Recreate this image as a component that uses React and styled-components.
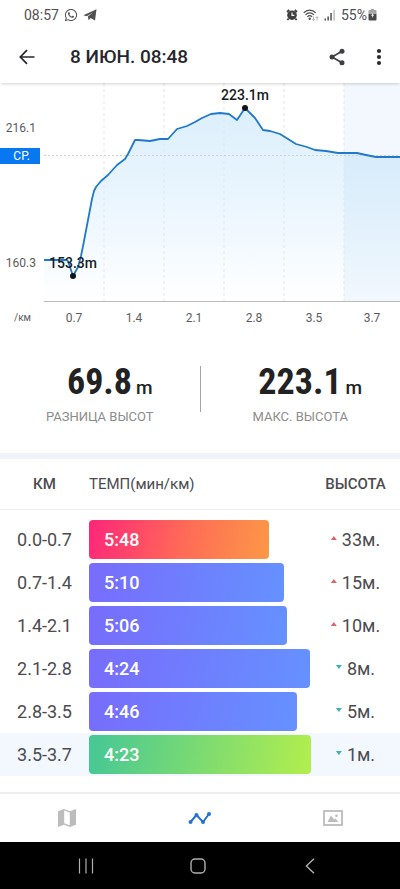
import React, { useState } from 'react'
import styled, { createGlobalStyle } from 'styled-components'
import { FaWhatsapp } from 'react-icons/fa'

const PLOT_WIDTH = 356
const PLOT_HEIGHT = 219

const elevation = [
    [0, 177], [22, 177], [24, 178], [29, 193], [34, 184], [37, 173], [40, 158], [44, 137],
    [48, 116], [50, 108], [52, 104], [57, 98], [64, 92], [73, 82], [81, 76], [84, 71],
    [91, 57], [94, 57], [106, 58], [116, 56], [124, 56], [133, 46], [143, 43], [151, 39],
    [158, 35], [167, 31], [176, 30], [185, 31], [193, 37], [201, 25], [211, 35], [219, 47],
    [226, 48], [236, 51], [252, 61], [263, 64], [271, 67], [282, 68], [294, 70], [313, 70],
    [322, 72], [332, 74], [356, 74]
]

const peaks = [
    { label: '153.3m', x: 29, y: 193 },
    { label: '223.1m', x: 201, y: 25 }
]

const distances = ['0.7', '1.4', '2.1', '2.8', '3.5', '3.7']

const splits = [
    { km: '0.0-0.7', pace: '5:48', width: 81, climb: 33, up: true, kind: 'slow' },
    { km: '0.7-1.4', pace: '5:10', width: 88, climb: 15, up: true },
    { km: '1.4-2.1', pace: '5:06', width: 89, climb: 10, up: true },
    { km: '2.1-2.8', pace: '4:24', width: 99.5, climb: 8 },
    { km: '2.8-3.5', pace: '4:46', width: 93.7, climb: 5 },
    { km: '3.5-3.7', pace: '4:23', width: 100, climb: 1, kind: 'fast' }
]

const gradients = {
    slow: 'linear-gradient(100deg, #ff2679, #ff6a57 52%, #fb9846)',
    normal: 'linear-gradient(100deg, #786cfc, #6591ff)',
    fast: 'linear-gradient(100deg, #45c796, #b3ee4d)'
}

const ElevationChart = () => {
    const line = elevation.map((p) => p.join(',')).join(' L')

    return (
        <Chart>
            <YAxis>
                <span>216.1</span>
                <Average>СР.</Average>
                <Lowest>160.3</Lowest>
            </YAxis>
            <Plot>
                <PlotSvg viewBox={`0 0 ${PLOT_WIDTH} ${PLOT_HEIGHT}`} preserveAspectRatio="none">
                    <defs>
                        <linearGradient id="area" x1="0" y1="0" x2="0" y2="1">
                            <stop offset="0" stopColor="#dceffc" />
                            <stop offset="0.5" stopColor="#ebf6fe" />
                            <stop offset="1" stopColor="#ffffff" />
                        </linearGradient>
                    </defs>
                    <path d={`M${line} L356,219 L0,219 Z`} fill="url(#area)" />
                    <rect x="300" y="0" width="56" height="219" fill="#2088dc" fillOpacity="0.06" />
                    {[60, 120, 180, 240, 300].map((x) => (
                        <line key={x} x1={x} x2={x} y1="0" y2="219" stroke="#e0e7ed" strokeDasharray="3 3" />
                    ))}
                    <line x1="0" x2="356" y1="72.5" y2="72.5" stroke="#ccd3d9" strokeDasharray="2 2" />
                    <path d={`M${line}`} fill="none" stroke="#2079cb" strokeWidth="1.8" strokeLinejoin="round" vectorEffect="non-scaling-stroke" />
                    <line x1="0" x2="356" y1="218.5" y2="218.5" stroke="#b8bbbe" />
                </PlotSvg>
                {peaks.map((p) => (
                    <Peak key={p.label} style={{ left: `${(p.x / PLOT_WIDTH) * 100}%`, top: p.y }}>
                        <PeakLabel>{p.label}</PeakLabel>
                    </Peak>
                ))}
            </Plot>
            <Unit>/км</Unit>
            <XAxis>
                {distances.map((d) => <span key={d}>{d}</span>)}
            </XAxis>
        </Chart>
    )
}

const App = () => {
    const [tab, setTab] = useState('chart')

    return (
        <>
            <GlobalStyle />
            <Page>
                <StatusBar>
                    <StatusGroup>
                        <span>08:57</span>
                        <FaWhatsapp size={14} />
                        <svg width="14" height="12" viewBox="0 0 14 12">
                            <path fill="#505053" d="M0.4 6.2 13.5 0.3 12 11.6 7.6 9 5.6 11.2 4.9 7.6 10.2 3.2 3.7 7.2Z" />
                        </svg>
                    </StatusGroup>
                    <StatusGroup>
                        <svg width="12" height="12" viewBox="0 0 12 12">
                            <path d="M1 3 3.2 1M11 3 8.8 1M2.6 9.6 1.4 11M9.4 9.6 10.6 11" stroke="#3f3f42" strokeWidth="1.8" />
                            <circle cx="6" cy="6.2" r="4.8" fill="#3f3f42" />
                            <path d="M6 3.4V6.4H8.4" fill="none" stroke="#fff" strokeWidth="1.1" />
                        </svg>
                        <svg width="16" height="12" viewBox="0 0 16 12">
                            <g fill="none" stroke="#505053" strokeWidth="1.2">
                                <path d="M0.7 3.8C4 0.2 9.4 0.2 12.7 3.8" />
                                <path d="M2.5 5.8C5 3.2 8.4 3.2 10.9 5.8" />
                                <path d="M4.3 7.8C5.9 6.2 7.5 6.2 9.1 7.8" />
                            </g>
                            <circle cx="6.7" cy="9.8" r="1.2" fill="#505053" />
                            <path d="M10.5 7.5V11.5M9.3 10.3 10.5 11.6 11.7 10.3M14 11.5V7.8M12.9 8.9 14 7.6 15.1 8.9" fill="none" stroke="#a2a2a5" strokeWidth="0.8" />
                        </svg>
                        <svg width="12" height="12" viewBox="0 0 12 12">
                            <path fill="#505053" d="M0.5 9.5H2V11.5H0.5ZM3.4 7.5H4.9V11.5H3.4ZM6.3 4H7.8V11.5H6.3Z" />
                            <path fill="#bcbcbf" d="M9.4 1H10.9V11.5H9.4Z" />
                        </svg>
                        <Battery>
                            55%
                            <svg width="9" height="12" viewBox="0 0 9 12">
                                <path fill="#a5a5a8" d="M3 0H6V1H7.5Q8.5 1 8.5 2V5H0.5V2Q0.5 1 1.5 1H3Z" />
                                <path fill="#48484b" d="M0.5 5H8.5V10.5Q8.5 11.5 7.5 11.5H1.5Q0.5 11.5 0.5 10.5Z" />
                                <path fill="#fff" d="M5.3 3.4 3 6.8H4.4L3.9 9.2 6.1 5.8H4.8Z" />
                            </svg>
                        </Battery>
                    </StatusGroup>
                </StatusBar>

                <AppBar>
                    <IconButton aria-label="Назад">
                        <svg width="16" height="16" viewBox="0 0 16 16" fill="none" stroke="#26262c" strokeWidth="1.7">
                            <path d="M15.5 8H1.5M8 1.2 1.3 8 8 14.8" />
                        </svg>
                    </IconButton>
                    <Title>8 ИЮН. 08:48</Title>
                    <IconButton aria-label="Поделиться">
                        <svg width="16" height="18" viewBox="0 0 16 18">
                            <path d="M13 3.2 3 9 13 14.8" fill="none" stroke="#3d3d42" strokeWidth="1.7" />
                            <g fill="#3d3d42">
                                <circle cx="13" cy="3.2" r="2.5" />
                                <circle cx="3" cy="9" r="2.5" />
                                <circle cx="13" cy="14.8" r="2.5" />
                            </g>
                        </svg>
                    </IconButton>
                    <IconButton aria-label="Ещё">
                        <svg width="16" height="18" viewBox="0 0 16 18" fill="#2a2a30">
                            <circle cx="8" cy="3" r="2.1" />
                            <circle cx="8" cy="9" r="2.1" />
                            <circle cx="8" cy="15" r="2.1" />
                        </svg>
                    </IconButton>
                </AppBar>

                <Content>
                    <ElevationChart />

                    <Stats>
                        <Stat>
                            <Value><Digits>69.8</Digits>m</Value>
                            <Caption>РАЗНИЦА ВЫСОТ</Caption>
                        </Stat>
                        <Divider />
                        <Stat>
                            <Value><Digits>223.1</Digits>m</Value>
                            <Caption>МАКС. ВЫСОТА</Caption>
                        </Stat>
                    </Stats>

                    <Table>
                        <thead>
                            <tr>
                                <HeadCell $side $bold>КМ</HeadCell>
                                <HeadCell>ТЕМП(мин/км)</HeadCell>
                                <HeadCell $side $bold>ВЫСОТА</HeadCell>
                            </tr>
                        </thead>
                        <tbody>
                            {splits.map((s) => (
                                <Row key={s.km} $active={s.kind === 'fast'}>
                                    <Cell>{s.km}</Cell>
                                    <Cell>
                                        <Bar $kind={s.kind || 'normal'} style={{ width: `${s.width}%` }}>{s.pace}</Bar>
                                    </Cell>
                                    <Cell>
                                        <Climb>
                                            <Arrow $up={s.up} />
                                            {s.climb}м.
                                        </Climb>
                                    </Cell>
                                </Row>
                            ))}
                        </tbody>
                    </Table>
                </Content>

                <Tabs>
                    <Tab aria-label="Карта" $active={tab === 'map'} onClick={() => setTab('map')}>
                        <svg width="18" height="18" viewBox="0 0 18 18" fill="currentColor">
                            <path d="M0 2.2 6 0 12 2.2 18 0V15.8L12 18 6 15.8 0 18Z" />
                            <path d="M6.2 1.6 11.8 3.6V16.3L6.2 14.3Z" fill="#fff" />
                        </svg>
                    </Tab>
                    <Tab aria-label="Графики" $active={tab === 'chart'} onClick={() => setTab('chart')}>
                        <svg width="24" height="16" viewBox="0 0 24 16" fill="currentColor">
                            <path d="M2.5 12 8.5 5 15 12 21 4" fill="none" stroke="currentColor" strokeWidth="2" />
                            <circle cx="2.5" cy="12" r="2" />
                            <circle cx="8.5" cy="5" r="2" />
                            <circle cx="15" cy="12" r="2" />
                            <circle cx="21" cy="4" r="2" />
                        </svg>
                    </Tab>
                    <Tab aria-label="Фото" $active={tab === 'photo'} onClick={() => setTab('photo')}>
                        <svg width="20" height="16" viewBox="0 0 20 16" fill="currentColor">
                            <rect x="1" y="1" width="18" height="14" fill="none" stroke="currentColor" strokeWidth="1.8" />
                            <path d="M4.5 12 8 5.5 11 9.5 12.5 8.5 15.5 12Z" />
                            <circle cx="13.5" cy="5.8" r="1.3" />
                        </svg>
                    </Tab>
                </Tabs>

                <SystemNav>
                    <NavButton aria-label="Недавние">
                        <svg width="16" height="16" viewBox="0 0 16 16" stroke="#b0b0b0" strokeWidth="1.2">
                            <path d="M1.5 0.5V15.5M8 0.5V15.5M14.5 0.5V15.5" />
                        </svg>
                    </NavButton>
                    <NavButton aria-label="Домой">
                        <svg width="16" height="16" viewBox="0 0 16 16" fill="none" stroke="#b0b0b0" strokeWidth="1.4">
                            <rect x="1" y="1" width="14" height="14" rx="4" />
                        </svg>
                    </NavButton>
                    <NavButton aria-label="Назад">
                        <svg width="16" height="16" viewBox="0 0 16 16" fill="none" stroke="#b0b0b0" strokeWidth="1.4">
                            <path d="M12 0.7 4.4 8 12 15.3" />
                        </svg>
                    </NavButton>
                </SystemNav>
            </Page>
        </>
    )
}

export default App

// CSS

const GlobalStyle = createGlobalStyle`
* {
    box-sizing: border-box;
}
body {
    margin: 0;
    background: #fff;
    font-family: Roboto, "Noto Sans", sans-serif;
}
svg {
    display: block;
}
button {
    display: flex;
    align-items: center;
    justify-content: center;
    padding: 0;
    border: none;
    background: none;
    cursor: pointer;
}
`

const Page = styled.div`
display: flex;
flex-direction: column;
min-height: 100vh;
background: #fff;
`

const StatusBar = styled.div`
display: flex;
align-items: center;
justify-content: space-between;
height: 30px;
padding: 0 23px 0 24px;
font-size: 14px;
color: #505053;
`

const StatusGroup = styled.div`
display: flex;
align-items: center;
gap: 5px;
`

const Battery = styled.div`
display: flex;
align-items: center;
gap: 1px;
`

const AppBar = styled.header`
display: flex;
align-items: center;
height: 53px;
padding: 0 0 0 6px;
box-shadow: 0 2px 3px -1px rgba(0, 0, 0, 0.18);
z-index: 1;
`

const IconButton = styled.button`
width: 42px;
height: 42px;
`

const Title = styled.h1`
flex: 1;
margin: 0;
padding-left: 22px;
font-size: 19px;
font-weight: 500;
color: #26262c;
`

const Content = styled.main`
flex: 1;
padding-bottom: 16px;
`

const Chart = styled.section`
display: grid;
grid-template-columns: 44px 1fr;
grid-template-rows: 219px 32px;
`

const YAxis = styled.div`
display: flex;
flex-direction: column;
padding: 37px 4px 31px 0;
font-size: 12px;
line-height: 16px;
text-align: right;
color: #5c5c60;
span {
    padding-right: 4px;
}
`

const Average = styled.div`
margin-top: 12px;
padding-right: 10px;
color: white;
background: #0878f0;
`

const Lowest = styled.span`
margin-top: auto;
`

const Plot = styled.div`
position: relative;
`

const PlotSvg = styled.svg`
width: 100%;
height: 219px;
`

const Peak = styled.div`
position: absolute;
width: 6px;
height: 6px;
margin: -3px;
border-radius: 50%;
background: #101418;
`

const PeakLabel = styled.span`
position: absolute;
bottom: 8px;
left: 50%;
transform: translateX(-50%);
font-size: 14px;
font-weight: 500;
line-height: 16px;
color: #1a1c1f;
`

const Unit = styled.div`
padding-right: 13px;
font-size: 10px;
line-height: 32px;
text-align: right;
color: #5c5c60;
`

const XAxis = styled.div`
display: grid;
grid-template-columns: repeat(5, 15fr) 14fr;
font-size: 12px;
line-height: 32px;
text-align: center;
color: #5c5c60;
`

const Stats = styled.section`
display: flex;
align-items: flex-start;
padding: 32px 0 28px;
border-bottom: 6px solid #eff3f8;
`

const Stat = styled.div`
flex: 1;
text-align: center;
`

const Value = styled.div`
display: flex;
align-items: baseline;
justify-content: center;
gap: 4px;
height: 43px;
padding-left: 20px;
font-size: 19px;
font-weight: 500;
line-height: 32px;
color: #222;
`

const Digits = styled.span`
font-family: "DIN Condensed", "Roboto Condensed", "Liberation Sans Narrow", sans-serif;
font-size: 36px;
font-weight: 700;
`

const Caption = styled.div`
font-size: 13px;
line-height: 16px;
color: #8c8c8c;
`

const Divider = styled.div`
width: 1px;
height: 46px;
background: #a5a5a5;
`

const Table = styled.table`
width: 100%;
table-layout: fixed;
border-spacing: 0;
color: #4c4c4f;
thead::after {
    content: '';
    display: block;
    height: 8px;
}
`

const HeadCell = styled.th`
width: ${(props) => (props.$side ? '89px' : 'auto')};
height: 51px;
padding: 0;
border-bottom: 1px solid #ececec;
font-size: 15px;
font-weight: ${(props) => (props.$bold ? 500 : 400)};
text-align: ${(props) => (props.$side ? 'center' : 'left')};
`

const Row = styled.tr`
background: ${(props) => (props.$active ? '#f2f8fd' : 'transparent')};
`

const Cell = styled.td`
height: 43px;
padding: 2px 0;
font-size: 18px;
text-align: center;
`

const Bar = styled.div`
padding-left: 15px;
border-radius: 4px;
font-weight: 500;
line-height: 39px;
text-align: left;
color: white;
background: ${(props) => gradients[props.$kind]};
`

const Climb = styled.div`
display: flex;
align-items: center;
justify-content: center;
gap: 5px;
`

const Arrow = styled.i`
width: 6px;
height: 4px;
margin-bottom: 3px;
clip-path: ${(props) => (props.$up ? 'polygon(50% 0, 100% 100%, 0 100%)' : 'polygon(0 0, 100% 0, 50% 100%)')};
background: ${(props) => (props.$up ? '#e0606e' : '#3fb0b0')};
`

const Tabs = styled.nav`
display: grid;
grid-template-columns: repeat(3, 1fr);
height: 50px;
border-top: 2px solid #efefef;
`

const Tab = styled.button`
color: ${(props) => (props.$active ? '#2274d2' : '#bcbcbc')};
`

const SystemNav = styled.footer`
display: flex;
align-items: center;
justify-content: center;
gap: 88px;
height: 47px;
padding-right: 4px;
background: #000;
`

const NavButton = styled.button`
width: 24px;
height: 24px;
`
